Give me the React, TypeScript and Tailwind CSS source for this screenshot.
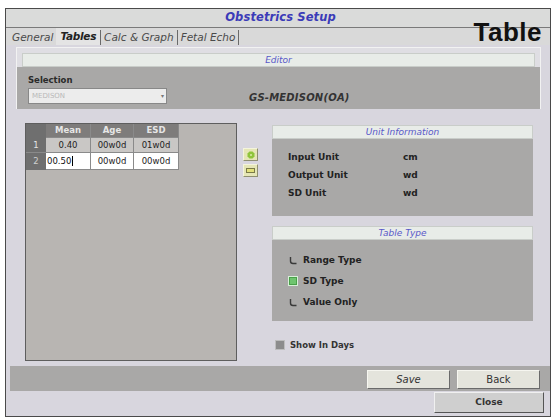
import React from "react";

const F = "font-['DejaVu_Sans',sans-serif]";

function Radio({ checked }: { checked?: boolean }) {
  if (checked) {
    return (
      <div className="w-[10px] h-[10px] bg-[#6fc46f] border border-[#d8f0d8] shadow-[inset_0_0_0_1px_#4aa04a]" />
    );
  }
  return (
    <svg width="10" height="10" viewBox="0 0 10 10">
      <path d="M2.5 2 V6 A2.5 2.5 0 0 0 5 8.5 H8.5" fill="none" stroke="#3a3a3a" strokeWidth="1.4" />
    </svg>
  );
}

function PanelHeader({ label }: { label: string }) {
  return (
    <div className="h-[14px] bg-[#e8ece8] border border-[#c9cdc9] flex items-center justify-center">
      <span className={`${F} text-[9px] italic text-[#5858c8] leading-none`}>{label}</span>
    </div>
  );
}

export default function App() {
  const cell = "flex items-center justify-center border-r border-b border-[#8a8a8a]";
  return (
    <div className={`w-[557px] h-[420px] bg-white pt-[8px] pl-[5px] ${F}`}>
      <div className="relative w-[546px] h-[409px] border border-[#4a4a4a] bg-[#d8d6de] flex flex-col">
        {/* Title bar */}
        <div className="h-[19px] bg-[#dadbda] border-b border-[#7a7a7a] flex items-center justify-center">
          <span className="text-[11.5px] font-bold italic text-[#3b3bb8] leading-none tracking-[0.1px] ml-[5px]">
            Obstetrics Setup
          </span>
        </div>
        {/* Big Table label */}
        <div className="absolute right-[8px] top-[10px] font-['Liberation_Sans',sans-serif] text-[26px] font-bold text-[#111] leading-none tracking-[0.5px]">
          Table
        </div>
        {/* Tabs */}
        <div className="h-[17px] bg-[#d9d9d9] flex items-end pl-[6px] text-[10.5px] italic text-[#4a4a4a] leading-none">
          <div className="h-[15px] flex items-center pr-[3px]">General</div>
          <div className="h-[17px] flex items-center px-[4px] bg-[#e4e4e4] text-[#222] font-semibold italic tracking-[-0.3px]">
            Tables
          </div>
          <div className="h-[15px] flex items-center px-[3px] border-l border-r border-[#6a6a6a]">Calc &amp; Graph</div>
          <div className="h-[15px] flex items-center px-[3px] border-r border-[#6a6a6a]">Fetal Echo</div>
        </div>

        {/* Editor */}
        <div className="mt-[2px] ml-[10px] mr-[9px] h-[62px] border-t border-l border-r border-[#f2f2f2] bg-[#dfdee3] flex flex-col">
          <div className="mt-[5px] mx-[5px]">
            <PanelHeader label="Editor" />
          </div>
          <div className="h-[42px] bg-[#a9a8a7] flex items-end pl-[11px] pb-[5px]">
            <div className="flex flex-col">
              <span className="text-[8.5px] font-bold text-[#2a2a2a] leading-none mb-[4px]">Selection</span>
              <div className="w-[139px] h-[16px] bg-[#ececec] border border-[#888] flex items-center justify-between pl-[3px] pr-[2px]">
                <span className="text-[7px] text-[#b8b8b8] leading-none">MEDISON</span>
                <span className="text-[6px] text-[#777] leading-none">▾</span>
              </div>
            </div>
            <div className="ml-[82px] mb-[1px] text-[10px] font-bold italic text-[#333] leading-none tracking-[0.2px]">
              GS-MEDISON(OA)
            </div>
          </div>
        </div>

        {/* Lower area */}
        <div className="h-[257px] flex">
          {/* Table panel */}
          <div className="ml-[19px] mt-[14px] w-[212px] h-[238px] bg-[#b8b5b2] border border-[#5e5e5e]">
            <div className="flex flex-col text-[8.5px] leading-none">
              <div className="flex h-[14px]">
                <div className="w-[20px] bg-[#6f6f6f]" />
                <div className={`w-[45px] bg-[#7e7c7b] text-[#e6e6e6] font-semibold ${cell}`}>Mean</div>
                <div className={`w-[43px] bg-[#7e7c7b] text-[#e6e6e6] font-semibold ${cell}`}>Age</div>
                <div className={`w-[45px] bg-[#7e7c7b] text-[#e6e6e6] font-semibold ${cell}`}>ESD</div>
              </div>
              <div className="flex h-[15px]">
                <div className="w-[20px] bg-[#6f6f6f] text-[#e6e6e6] flex items-center justify-center border-b border-[#8a8a8a]">1</div>
                <div className={`w-[45px] bg-[#c9c7c5] text-[#222] ${cell}`}>0.40</div>
                <div className={`w-[43px] bg-[#c9c7c5] text-[#222] ${cell}`}>00w0d</div>
                <div className={`w-[45px] bg-[#c9c7c5] text-[#222] ${cell}`}>01w0d</div>
              </div>
              <div className="flex h-[17px]">
                <div className="w-[20px] bg-[#6f6f6f] text-[#cfcfcf] flex items-center justify-center">2</div>
                <div className="w-[45px] bg-white text-[#111] flex items-center pl-[1px] border-r border-b border-[#8a8a8a]">
                  00.50<span className="inline-block w-[1px] h-[10px] bg-black ml-[1px]" />
                </div>
                <div className={`w-[43px] bg-white text-[#222] ${cell}`}>00w0d</div>
                <div className={`w-[45px] bg-white text-[#222] ${cell}`}>00w0d</div>
              </div>
            </div>
          </div>

          {/* +/- buttons */}
          <div className="ml-[6px] mt-[39px] flex flex-col gap-[3px]">
            <div className="w-[15px] h-[13px] bg-[#e5e6b6] border-r border-b border-[#8f8f70] border-t border-l border-t-[#f4f4dc] border-l-[#f4f4dc] flex items-center justify-center">
              <svg width="8" height="8" viewBox="0 0 8 8">
                <path d="M2.5 0.5 H5.5 L7.5 2.5 V5.5 L5.5 7.5 H2.5 L0.5 5.5 V2.5 Z" fill="#8fc43a" />
                <rect x="3" y="3" width="2" height="2" fill="#c6e08a" />
              </svg>
            </div>
            <div className="w-[15px] h-[13px] bg-[#e5e6b6] border-r border-b border-[#8f8f70] border-t border-l border-t-[#f4f4dc] border-l-[#f4f4dc] flex items-center justify-center">
              <div className="w-[9px] h-[5px] border border-[#7a7a48] bg-[#e2e07a]" />
            </div>
          </div>

          {/* Right column */}
          <div className="ml-[14px] mt-[16px] w-[261px] flex flex-col">
            <PanelHeader label="Unit Information" />
            <div className="h-[77px] bg-[#a9a8a7] pl-[16px] pt-[14px] flex flex-col gap-[9px] text-[9px] font-semibold text-[#222] leading-none">
              <div className="flex"><span className="w-[115px]">Input Unit</span><span>cm</span></div>
              <div className="flex"><span className="w-[115px]">Output Unit</span><span>wd</span></div>
              <div className="flex"><span className="w-[115px]">SD Unit</span><span>wd</span></div>
            </div>
            <div className="mt-[10px]">
              <PanelHeader label="Table Type" />
            </div>
            <div className="h-[81px] bg-[#a9a8a7] pl-[16px] pt-[15px] flex flex-col gap-[11px] text-[9px] font-semibold text-[#222] leading-none">
              <div className="flex items-center gap-[5px]"><Radio /><span>Range Type</span></div>
              <div className="flex items-center gap-[5px]"><Radio checked /><span>SD Type</span></div>
              <div className="flex items-center gap-[5px]"><Radio /><span>Value Only</span></div>
            </div>
            <div className="mt-[19px] ml-[3px] flex items-center gap-[5px] text-[8.5px] font-semibold text-[#333] leading-none">
              <div className="w-[10px] h-[10px] bg-[#8c8c8c] border border-[#bdbdbd]" />
              <span>Show In Days</span>
            </div>
          </div>
        </div>

        {/* Bottom bar */}
        <div className="h-[25px] ml-[4px] bg-[#a9a8a7] flex items-start justify-end pt-[4px] pr-[10px] gap-[7px]">
          <button className="w-[83px] h-[19px] bg-[#e4e4dc] border border-[#f6f6f0] border-r-[#6a6a6a] border-b-[#6a6a6a] text-[10px] italic text-[#333] leading-none">
            Save
          </button>
          <button className="w-[83px] h-[19px] bg-[#e4e4dc] border border-[#f6f6f0] border-r-[#6a6a6a] border-b-[#6a6a6a] text-[10px] text-[#333] leading-none">
            Back
          </button>
        </div>
        <div className="h-[25px] flex items-start justify-end pt-[1px] pr-[6px]">
          <button className="w-[110px] h-[21px] bg-[#cfcfcf] border border-[#f0f0f0] border-r-[#555] border-b-[#555] text-[9px] font-bold text-[#333] leading-none">
            Close
          </button>
        </div>
      </div>
    </div>
  );
}
